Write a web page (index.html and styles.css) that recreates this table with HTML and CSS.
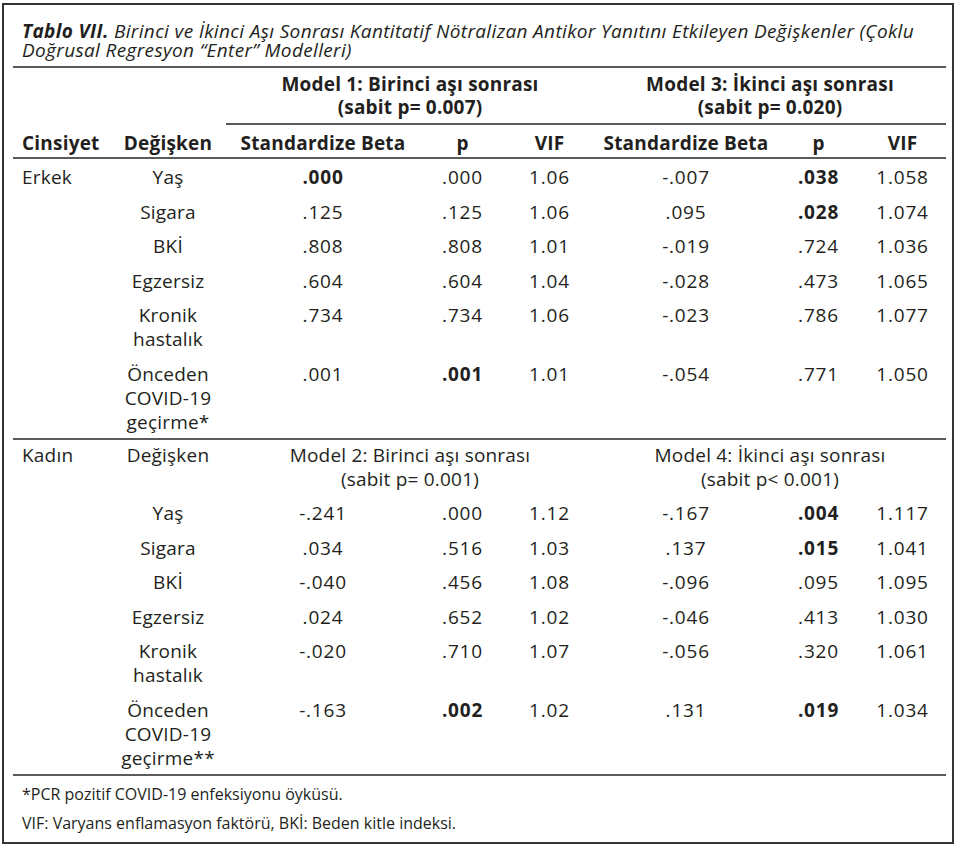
FILE: index.html
```html
<!DOCTYPE html>
<html lang="tr">
<head>
<meta charset="utf-8">
<title>Tablo VII</title>
<link rel="stylesheet" href="styles.css">
</head>
<body>
<div class="frame">
  <div class="caption"><b>Tablo VII.</b> Birinci ve İkinci Aşı Sonrası Kantitatif Nötralizan Antikor Yanıtını Etkileyen Değişkenler (Çoklu<br>Doğrusal Regresyon “Enter” Modelleri)</div>
  <table class="tbl">
    <colgroup>
      <col class="c1"><col class="c2"><col class="c3"><col class="c4"><col class="c5"><col class="c6"><col class="c7"><col class="c8">
    </colgroup>
    <thead>
      <tr class="model">
        <th></th><th></th>
        <th colspan="3" class="span">Model 1: Birinci aşı sonrası<br>(sabit p= 0.007)</th>
        <th colspan="3" class="span">Model 3: İkinci aşı sonrası<br>(sabit p= 0.020)</th>
      </tr>
      <tr class="cols">
        <th class="left">Cinsiyet</th><th>Değişken</th>
        <th>Standardize Beta</th><th>p</th><th>VIF</th>
        <th>Standardize Beta</th><th>p</th><th>VIF</th>
      </tr>
    </thead>
    <tbody class="group">
      <tr><td class="left">Erkek</td><td>Yaş</td><td class="n"><b>.000</b></td><td class="n">.000</td><td class="n">1.06</td><td class="n">-.007</td><td class="n"><b>.038</b></td><td class="n">1.058</td></tr>
      <tr><td></td><td>Sigara</td><td class="n">.125</td><td class="n">.125</td><td class="n">1.06</td><td class="n">.095</td><td class="n"><b>.028</b></td><td class="n">1.074</td></tr>
      <tr><td></td><td>BKİ</td><td class="n">.808</td><td class="n">.808</td><td class="n">1.01</td><td class="n">-.019</td><td class="n">.724</td><td class="n">1.036</td></tr>
      <tr><td></td><td>Egzersiz</td><td class="n">.604</td><td class="n">.604</td><td class="n">1.04</td><td class="n">-.028</td><td class="n">.473</td><td class="n">1.065</td></tr>
      <tr><td></td><td>Kronik<br>hastalık</td><td class="n">.734</td><td class="n">.734</td><td class="n">1.06</td><td class="n">-.023</td><td class="n">.786</td><td class="n">1.077</td></tr>
      <tr class="last"><td></td><td>Önceden<br>COVID-19<br>geçirme*</td><td class="n">.001</td><td class="n"><b>.001</b></td><td class="n">1.01</td><td class="n">-.054</td><td class="n">.771</td><td class="n">1.050</td></tr>
    </tbody>
    <tbody class="group">
      <tr class="sub"><td class="left">Kadın</td><td>Değişken</td>
        <td colspan="3">Model 2: Birinci aşı sonrası<br>(sabit p= 0.001)</td>
        <td colspan="3">Model 4: İkinci aşı sonrası<br>(sabit p&lt; 0.001)</td></tr>
      <tr><td></td><td>Yaş</td><td class="n">-.241</td><td class="n">.000</td><td class="n">1.12</td><td class="n">-.167</td><td class="n"><b>.004</b></td><td class="n">1.117</td></tr>
      <tr><td></td><td>Sigara</td><td class="n">.034</td><td class="n">.516</td><td class="n">1.03</td><td class="n">.137</td><td class="n"><b>.015</b></td><td class="n">1.041</td></tr>
      <tr><td></td><td>BKİ</td><td class="n">-.040</td><td class="n">.456</td><td class="n">1.08</td><td class="n">-.096</td><td class="n">.095</td><td class="n">1.095</td></tr>
      <tr><td></td><td>Egzersiz</td><td class="n">.024</td><td class="n">.652</td><td class="n">1.02</td><td class="n">-.046</td><td class="n">.413</td><td class="n">1.030</td></tr>
      <tr><td></td><td>Kronik<br>hastalık</td><td class="n">-.020</td><td class="n">.710</td><td class="n">1.07</td><td class="n">-.056</td><td class="n">.320</td><td class="n">1.061</td></tr>
      <tr class="last"><td></td><td>Önceden<br>COVID-19<br>geçirme**</td><td class="n">-.163</td><td class="n"><b>.002</b></td><td class="n">1.02</td><td class="n">.131</td><td class="n"><b>.019</b></td><td class="n">1.034</td></tr>
    </tbody>
  </table>
  <div class="notes">
    <p>*PCR pozitif COVID-19 enfeksiyonu öyküsü.</p>
    <p>VIF: Varyans enflamasyon faktörü, BKİ: Beden kitle indeksi.</p>
  </div>
</div>
</body>
</html>
```

FILE: styles.css
```css
html, body {
  margin: 0;
  padding: 0;
  background: #ffffff;
}
body {
  font-family: "Open Sans", "Lato", sans-serif;
  color: #231f20;
}
.frame {
  box-sizing: border-box;
  margin: 3px 0 0 2px;
  width: 952px;
  height: 841px;
  border: 2px solid #333333;
  padding: 0 6px 0 9px;
  overflow: hidden;
}
.caption {
  font-style: italic;
  font-size: 19px;
  letter-spacing: 0.35px;
  line-height: 19px;
  padding: 17px 0 6px 9px;
  border-bottom: 2px solid #5a5a5a;
  white-space: nowrap;
}
.caption b {
  font-weight: 700;
}
.tbl {
  width: 933px;
  border-collapse: separate;
  border-spacing: 0;
  table-layout: fixed;
  font-size: 19px;
  letter-spacing: 0.2px;
  line-height: 24px;
}
.c1 { width: 97px; }
.c2 { width: 116px; }
.c3 { width: 194px; }
.c4 { width: 85px; }
.c5 { width: 89px; }
.c6 { width: 184px; }
.c7 { width: 81px; }
.c8 { width: 87px; }
.tbl th, .tbl td {
  padding: 6px 0 4.5px 0;
  text-align: center;
  vertical-align: top;
  white-space: nowrap;
}
.tbl .n {
  letter-spacing: 0.8px;
}
.tbl th {
  font-weight: 700;
}
.tbl .left {
  text-align: left;
  padding-left: 9px;
}
.model th {
  padding: 5px 0 4px 0;
  line-height: 23px;
}
.model th.span {
  border-bottom: 2px solid #5a5a5a;
}
.cols th {
  padding: 6px 0 2px 0;
  border-bottom: 2px solid #5a5a5a;
}
.cols th.left {
  padding-left: 9px;
}
.last td {
  border-bottom: 2px solid #5a5a5a;
}
.sub td {
  padding: 3px 0 4px 0;
}
.sub td.left {
  padding-left: 9px;
}
.tbl b {
  font-weight: 700;
}
.notes {
  padding: 8px 0 0 9px;
  font-size: 16px;
  line-height: 20px;
}
.notes p {
  margin: 0 0 9px 0;
}
.notes p:last-child {
  margin-bottom: 0;
}
```
